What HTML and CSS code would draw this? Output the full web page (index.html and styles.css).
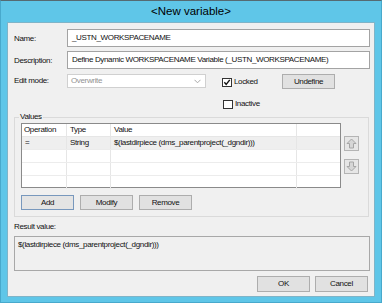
FILE: index.html
```html
<!DOCTYPE html>
<html>
<head>
<meta charset="utf-8">
<link rel="stylesheet" href="styles.css">
</head>
<body>
<div class="window">
  <div class="titlebar">&lt;New variable&gt;</div>
  <div class="client">
    <div class="row">
      <span class="lbl">Name:</span>
      <div class="input">_USTN_WORKSPACENAME</div>
    </div>
    <div class="row r2">
      <span class="lbl">Description:</span>
      <div class="input">Define Dynamic WORKSPACENAME Variable (_USTN_WORKSPACENAME)</div>
    </div>
    <div class="row r3">
      <span class="lbl">Edit mode:</span>
      <div class="combo"><span>Overwrite</span>
        <svg class="caret" width="7" height="5" viewBox="0 0 7 5"><path d="M0.5 0.8 L3.5 3.8 L6.5 0.8" fill="none" stroke="#a8a8a8" stroke-width="1"/></svg>
      </div>
      <label class="check locked"><span class="box"><svg width="9" height="9" viewBox="0 0 9 9"><path d="M1.5 4.2 L3.6 6.6 L7.6 1.6" fill="none" stroke="#111" stroke-width="1.6"/></svg></span>Locked</label>
      <div class="btn undefine">Undefine</div>
    </div>
    <div class="row r4">
      <label class="check inactive"><span class="box"></span>Inactive</label>
    </div>
    <fieldset class="group">
      <legend>Values</legend>
      <div class="gtop">
        <div class="list">
          <div class="lrow head">
            <div class="c c1">Operation</div><div class="c c2">Type</div><div class="c c3">Value</div><div class="c c4"></div>
          </div>
          <div class="lrow sel">
            <div class="c c1">=</div><div class="c c2">String</div><div class="c c3">$(lastdirpiece (dms_parentproject(_dgndir)))</div><div class="c c4"></div>
          </div>
          <div class="lrow">
            <div class="c c1"></div><div class="c c2"></div><div class="c c3"></div><div class="c c4"></div>
          </div>
          <div class="lrow">
            <div class="c c1"></div><div class="c c2"></div><div class="c c3"></div><div class="c c4"></div>
          </div>
          <div class="lrow last">
            <div class="c c1"></div><div class="c c2"></div><div class="c c3"></div><div class="c c4"></div>
          </div>
        </div>
        <div class="side">
          <div class="sbtn"><svg width="11" height="11" viewBox="0 0 11 11"><path d="M5.5 1 L10 5.5 L7.5 5.5 L7.5 10 L3.5 10 L3.5 5.5 L1 5.5 Z" fill="#d6d6d6" stroke="#a6a6a6" stroke-width="1" stroke-linejoin="round"/></svg></div>
          <div class="sbtn down"><svg width="11" height="11" viewBox="0 0 11 11"><path d="M5.5 10 L10 5.5 L7.5 5.5 L7.5 1 L3.5 1 L3.5 5.5 L1 5.5 Z" fill="#d6d6d6" stroke="#a6a6a6" stroke-width="1" stroke-linejoin="round"/></svg></div>
        </div>
      </div>
      <div class="gbtns">
        <div class="btn add">Add</div>
        <div class="btn">Modify</div>
        <div class="btn">Remove</div>
      </div>
    </fieldset>
    <div class="rlabel">Result value:</div>
    <div class="result">$(lastdirpiece (dms_parentproject(_dgndir)))</div>
    <div class="footer">
      <div class="btn ok">OK</div>
      <div class="btn ok">Cancel</div>
    </div>
  </div>
</div>
</body>
</html>
```
FILE: styles.css
```css
* { box-sizing: border-box; }
html, body { margin: 0; padding: 0; }
body {
  width: 382px;
  height: 303px;
  overflow: hidden;
  font-family: "Liberation Sans", Arial, sans-serif;
  font-size: 8px;
  letter-spacing: -0.35px;
  color: #111;
}
.window {
  width: 382px;
  height: 303px;
  background: #5fc6e8;
  border: 1px solid #48a9cc;
  border-top-color: #556a72;
  display: flex;
  flex-direction: column;
}
.titlebar {
  height: 21px;
  line-height: 21px;
  text-align: center;
  font-size: 11.5px;
  letter-spacing: 0;
  color: #000;
}
.client {
  margin-left: 6px;
  width: 368px;
  height: 275px;
  background: #f0f0f0;
  border: 1px solid #7fb4c8;
  padding: 6px 4px 0 6px;
  display: flex;
  flex-direction: column;
}
.row { display: flex; align-items: center; }
.lbl { width: 53px; flex: none; }
.input {
  width: 303px;
  height: 18px;
  line-height: 16px;
  background: #fff;
  border: 1px solid #a3a3a3;
  padding-left: 4px;
  white-space: nowrap;
  overflow: hidden;
}
.r2 { margin-top: 4px; }
.r3 { margin-top: 5px; align-items: flex-start; height: 15px; }
.r3 .lbl { line-height: 14px; }
.combo {
  width: 139px;
  height: 14px;
  border: 1px solid #d0d0d0;
  background: #fff;
  color: #939393;
  padding-left: 3px;
  line-height: 12px;
  display: flex;
  justify-content: space-between;
  align-items: center;
}
.caret { margin-right: 4px; }
.check { display: flex; align-items: center; line-height: 10px; }
.box {
  width: 10px;
  height: 9px;
  border: 1px solid #333;
  background: #fff;
  margin-right: 2px;
  display: flex;
  align-items: center;
  justify-content: center;
}
.locked { margin-left: 16px; margin-top: 3px; width: 60px; }
.btn {
  height: 15px;
  line-height: 13px;
  text-align: center;
  background: #e1e1e1;
  border: 1px solid #adadad;
}
.undefine { width: 53px; }
.r4 { margin-top: 10px; padding-left: 209px; }
.group {
  margin: 3px 1px 0 0;
  padding: 1px 6px 6px 6px;
  border: 1px solid #dadada;
  min-width: 0;
}
.group legend {
  padding: 0 1px;
  margin-left: -2px;
  line-height: 10px;
}
.gtop { display: flex; }
.list {
  width: 320px;
  height: 65px;
  border: 1px solid #8a8a8a;
  background: #fff;
}
.lrow { display: flex; height: 13px; border-bottom: 1px solid #ececec; }
.lrow.last { border-bottom: none; }
.lrow.head { border-bottom: 1px solid #e6e6e6; }
.lrow.sel { background: #efefef; }
.c { line-height: 12px; padding-left: 3px; border-right: 1px solid #e6e6e6; white-space: nowrap; overflow: hidden; }
.c1 { width: 45px; }
.c2 { width: 44px; }
.c3 { width: 186px; }
.c4 { flex: 1; border-right: none; }
.lrow.head .c1 { padding-left: 2px; }
.side { margin-left: 3px; padding-top: 13px; display: flex; flex-direction: column; }
.sbtn {
  width: 15px;
  height: 15px;
  background: #e6e6e6;
  border: 1px solid #b4b4b4;
  display: flex;
  align-items: center;
  justify-content: center;
}
.sbtn.down { margin-top: 8px; }
.gbtns { display: flex; gap: 6px; margin-top: 7px; }
.gbtns .btn { width: 53px; }
.btn.add { border-color: #7898bd; background: #e4e4e4; }
.rlabel { margin-top: 5px; line-height: 10px; }
.result {
  margin-top: 4px;
  width: 356px;
  height: 35px;
  border: 1px solid #a8a8a8;
  background: #f0f0f0;
  padding: 3px 3px;
  line-height: 10px;
}
.footer { display: flex; justify-content: flex-end; gap: 5px; margin-top: 5px; padding-right: 2px; }
.btn.ok { width: 53px; height: 16px; line-height: 14px; }
```
